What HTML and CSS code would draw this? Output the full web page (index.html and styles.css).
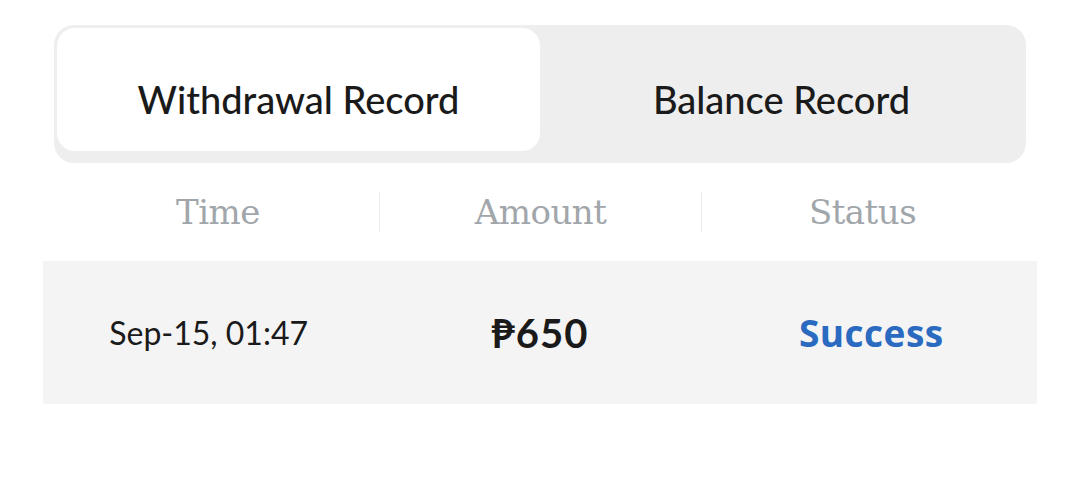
FILE: index.html
```html
<!DOCTYPE html>
<html>

<head>
  <title>Withdrawal Record</title>
  <link rel="stylesheet" href="styles.css">
</head>

<body>
  <div class="page">
    <div class="tabs">
      <div class="tab active">Withdrawal Record</div>
      <div class="tab">Balance Record</div>
    </div>

    <div class="thead">
      <div class="th">Time</div>
      <div class="th">Amount</div>
      <div class="th">Status</div>
    </div>

    <div class="row">
      <div class="cell time">Sep-15, 01:47</div>
      <div class="cell amount">₱650</div>
      <div class="cell status">Success</div>
    </div>
  </div>
</body>

</html>
```

FILE: styles.css
```css
* {
  box-sizing: border-box;
}

body {
  margin: 0;
  background-color: #fff;
  font-family: Lato, "Open Sans", sans-serif;
  color: #1a1a1a;
}

.page {
  padding-top: 25px;
}

.tabs {
  display: flex;
  margin: 0 54px;
  padding: 3px 3px 12px;
  background-color: #eeeeee;
  border-radius: 20px;
}

.tab {
  flex: 1;
  height: 123px;
  padding-top: 18px;
  display: flex;
  align-items: center;
  justify-content: center;
  font-size: 38px;
  font-weight: 500;
  color: #1a1a1a;
}

.tab.active {
  background-color: #fff;
  border-radius: 18px;
}

.thead {
  display: grid;
  grid-template-columns: repeat(3, 1fr);
  margin: 0 57px;
  padding: 29px 0;
}

.th {
  height: 40px;
  display: flex;
  align-items: center;
  justify-content: center;
  font-family: "DejaVu Serif", serif;
  font-size: 34px;
  color: #a1a6ab;
  letter-spacing: -0.5px;
}

.th + .th {
  border-left: 1px solid #ececec;
}

.row {
  display: grid;
  grid-template-columns: repeat(3, 1fr);
  margin: 0 43px;
  height: 143px;
  background-color: #f4f4f4;
}

.cell {
  display: flex;
  align-items: center;
  justify-content: center;
}

.time {
  font-size: 32px;
}

.amount {
  font-size: 40px;
  font-weight: bold;
  letter-spacing: 1px;
}

.status {
  font-family: "Open Sans", Lato, sans-serif;
  font-size: 37px;
  font-weight: 700;
  letter-spacing: 0.5px;
  color: #2a6ac0;
}
```
